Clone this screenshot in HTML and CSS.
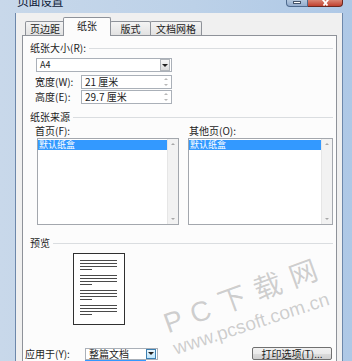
FILE: index.html
```html
<!DOCTYPE html>
<html lang="zh-CN">
<head>
<meta charset="utf-8">
<title>页面设置</title>
<link rel="stylesheet" href="styles.css">
</head>
<body>
<div class="window">
  <div class="titlebar">
    <span class="title">页面设置</span>
    <div class="caption">
      <span class="cap-min"><i></i></span>
      <span class="cap-close"><svg width="9" height="6" viewBox="0 0 9 6"><path d="M0.5 -2 L6.5 5.5 M8.5 -2 L2.5 5.5" stroke="#fff" stroke-width="1.8" fill="none"/></svg></span>
    </div>
  </div>
  <div class="frame">
    <div class="client">
      <div class="tabs">
        <span class="tab t1">页边距</span>
        <span class="tab t2 active">纸张</span>
        <span class="tab t3">版式</span>
        <span class="tab t4">文档网格</span>
      </div>
      <div class="panel">
        <div class="group"><span class="group-label">纸张大小(<u>R</u>):</span><span class="group-line"></span></div>
        <div class="combo size-combo"><span class="combo-text">A4</span><span class="combo-btn"><b></b></span></div>
        <div class="field-row first">
          <span class="field-label">宽度(<u>W</u>):</span>
          <div class="spin"><span class="spin-text">21 厘米</span><span class="spin-btn"><b class="up"></b><b class="down"></b></span></div>
        </div>
        <div class="field-row">
          <span class="field-label">高度(<u>E</u>):</span>
          <div class="spin"><span class="spin-text">29.7 厘米</span><span class="spin-btn"><b class="up"></b><b class="down"></b></span></div>
        </div>
        <div class="group source-group"><span class="group-label">纸张来源</span><span class="group-line"></span></div>
        <div class="source">
          <div class="src-col left">
            <span class="src-label">首页(<u>F</u>):</span>
            <div class="listbox">
              <div class="list-items"><span class="item selected">默认纸盒</span></div>
              <div class="vscroll"><b class="up"></b><b class="down"></b></div>
            </div>
          </div>
          <div class="src-col right">
            <span class="src-label">其他页(<u>O</u>):</span>
            <div class="listbox wide">
              <div class="list-items"><span class="item selected">默认纸盒</span></div>
              <div class="vscroll"><b class="up"></b><b class="down"></b></div>
            </div>
          </div>
        </div>
        <div class="group preview-group"><span class="group-label">预览</span><span class="group-line"></span></div>
        <div class="page">
          <div class="para"><i></i><i></i><i></i><i class="short"></i></div>
          <div class="para"><i></i><i></i><i></i><i class="short"></i></div>
          <div class="para"><i></i><i></i><i></i><i class="short"></i></div>
          <div class="para"><i></i><i></i><i></i><i class="short"></i></div>
        </div>
        <div class="bottom-row">
          <span class="apply-label">应用于(<u>Y</u>):</span>
          <div class="combo apply-combo"><span class="combo-text">整篇文档</span><span class="combo-btn hot"><b></b></span>
            <div class="drop-list"></div>
          </div>
          <span class="button">打印选项(<u>T</u>)...</span>
        </div>
      </div>
    </div>
  </div>
  <div class="watermark">
    <span class="wm-big">P C 下 载 网</span>
    <span class="wm-url">www.pcsoft.com.cn</span>
  </div>
</div>
</body>
</html>
```
FILE: styles.css
```css
* { box-sizing: border-box; margin: 0; padding: 0; }
html, body { width: 352px; height: 361px; overflow: hidden; }
body {
  font-family: "Noto Sans CJK SC", "Noto Sans", sans-serif;
  font-size: 10px;
  color: #1c1c1c;
  background: #c3d5ea;
}
u { text-decoration: none; }

.window {
  position: relative;
  width: 352px;
  height: 361px;
  display: flex;
  flex-direction: column;
  background: linear-gradient(to right, #c8d8ea, #bcd1e8 55%, #aec8e6);
}

/* title bar */
.titlebar {
  height: 13px;
  display: flex;
  align-items: flex-start;
  padding-left: 17px;
}
.title {
  font-size: 12px;
  line-height: 12px;
  margin-top: -5px;
  color: #0f2038;
  letter-spacing: -0.5px;
}
.caption {
  margin-left: auto;
  margin-right: 9px;
  display: flex;
  height: 7px;
}
.cap-min {
  width: 22px;
  height: 7px;
  border: 1px solid #4e6a8e;
  border-top: none;
  border-radius: 0 0 0 4px;
  background: linear-gradient(#b4c8de, #93acce);
  display: flex;
  justify-content: center;
}
.cap-min i {
  width: 8px;
  height: 3px;
  background: #fff;
  margin-top: 1px;
  border: 1px solid #44546a;
}
.cap-close {
  width: 35px;
  height: 7px;
  border: 1px solid #6b2820;
  border-top: none;
  border-left: none;
  border-radius: 0 0 4px 0;
  background: linear-gradient(#d98473, #c0412f);
  display: flex;
  justify-content: center;
}

/* window frame + client */
.frame {
  flex: 1;
  min-height: 0;
  display: flex;
  padding-left: 15px;
  padding-right: 9px;
}
.client {
  flex: 1;
  display: flex;
  flex-direction: column;
  background: #f0f0f0;
  border-left: 1px solid #6d88ab;
  border-right: 1px solid #6d88ab;
  padding: 4px 5px 0 6px;
}

/* tabs */
.tabs {
  height: 18px;
  display: flex;
  align-items: flex-end;
  padding-left: 3px;
  position: relative;
  z-index: 1;
}
.tab {
  height: 14px;
  border: 1px solid #8e9299;
  border-bottom: none;
  border-radius: 2px 2px 0 0;
  background: linear-gradient(#f4f4f4, #e2e2e2);
  font-size: 10px;
  line-height: 13px;
  text-align: center;
}
.t1 { width: 40px; }
.t2 { width: 48px; margin-left: -2px; }
.t3 { width: 41px; margin-left: -1px; }
.t4 { width: 52px; margin-left: -1px; }
.tab.active {
  height: 19px;
  margin-bottom: -1px;
  background: #fcfcfc;
  position: relative;
  z-index: 2;
  line-height: 16px;
}

/* panel */
.panel {
  flex: 1;
  border: 1px solid #8e9299;
  border-bottom: none;
  background: #fcfcfc;
  display: flex;
  flex-direction: column;
}
.group {
  height: 12px;
  margin-top: 6px;
  padding-left: 7px;
  display: flex;
  align-items: center;
  line-height: 12px;
}
.group-line {
  flex: 1;
  height: 1px;
  background: #dadde0;
  margin: 1px 3px 0 3px;
}

.combo {
  height: 14px;
  border: 1px solid #aab0b8;
  background: #fff;
  display: flex;
  align-items: center;
  font-size: 9px;
  padding: 0 1px 0 3px;
  line-height: 12px;
}
.combo-text { flex: 1; }
.combo-btn {
  width: 10px;
  height: 12px;
  border: 1px solid #b2b6bb;
  background: linear-gradient(#f6f6f6, #dcdcdc);
  display: flex;
  align-items: center;
  justify-content: center;
}
.combo-btn b {
  width: 0; height: 0;
  border-left: 3px solid transparent;
  border-right: 3px solid transparent;
  border-top: 3px solid #222;
}
.size-combo {
  width: 136px;
  margin: 4px 0 0 13px;
}

.field-row {
  display: flex;
  align-items: center;
  height: 14px;
  margin-top: 1px;
  padding-left: 12px;
}
.field-row.first { margin-top: 3px; }
.field-label { width: 46px; line-height: 12px; }
.spin {
  width: 91px;
  height: 14px;
  border: 1px solid #aab0b8;
  background: #fff;
  display: flex;
  align-items: center;
  padding: 0 1px 0 3px;
  line-height: 12px;
}
.spin-text { flex: 1; }
.spin-btn {
  width: 9px;
  height: 12px;
  display: flex;
  flex-direction: column;
  align-items: center;
  justify-content: space-around;
}
.spin-btn b { width: 0; height: 0; border-left: 2px solid transparent; border-right: 2px solid transparent; }
.spin-btn .up { border-bottom: 2px solid #b8b8b8; }
.spin-btn .down { border-top: 2px solid #b8b8b8; }

.source-group { margin-top: 7px; }

.source {
  display: grid;
  grid-template-columns: 153px 145px;
  padding-left: 12px;
  margin-top: 2px;
}
.src-col { display: flex; flex-direction: column; }
.src-label { height: 12px; line-height: 12px; margin-bottom: 1px; }
.right .src-label { padding-left: 1px; }
.listbox {
  height: 87px;
  border: 1px solid #a3a7ad;
  background: #fff;
  display: flex;
}
.left .listbox { width: 142px; margin-left: 2px; }
.listbox.wide { width: 145px; }
.list-items { flex: 1; padding: 1px 0 0 0; display: flex; flex-direction: column; }
.item {
  height: 10px;
  line-height: 10px;
  font-size: 9px;
  padding-left: 1px;
}
.item.selected { background: #3399ff; color: #fff; }
.vscroll {
  width: 11px;
  background: #f2f2f2;
  border-left: 1px solid #e6e6e6;
  display: flex;
  flex-direction: column;
  align-items: center;
  justify-content: space-between;
  padding: 4px 0;
}
.vscroll b { width: 0; height: 0; border-left: 2px solid transparent; border-right: 2px solid transparent; }
.vscroll .up { border-bottom: 2px solid #a8a8a8; }
.vscroll .down { border-top: 2px solid #a8a8a8; }

.preview-group { margin-top: 12px; }

.page {
  width: 52px;
  height: 72px;
  margin: 4px 0 0 50px;
  border: 1px solid #303030;
  background: #fff;
  padding: 6px 7px 0 6px;
  display: flex;
  flex-direction: column;
  gap: 5px;
}
.para { display: flex; flex-direction: column; gap: 2px; }
.para i { height: 1px; background: #4a4a4a; }
.para i.short { width: 12px; }

.bottom-row {
  display: flex;
  align-items: center;
  height: 13px;
  margin-top: 22px;
  padding-left: 2px;
}
.apply-label { width: 60px; line-height: 12px; }
.apply-combo {
  width: 73px;
  height: 12px;
  position: relative;
  font-size: 10px;
}
.combo-btn.hot {
  height: 10px;
  border-color: #3c7fb1;
  background: linear-gradient(#eaf6fd, #bee6fd);
}
.drop-list {
  position: absolute;
  left: -1px;
  top: 11px;
  width: 61px;
  height: 4px;
  background: #3399ff;
}
.button {
  margin-left: auto;
  margin-right: 4px;
  width: 80px;
  height: 13px;
  border: 1px solid #707070;
  border-radius: 2px;
  background: linear-gradient(#f2f2f2 0%, #ebebeb 50%, #dddddd 51%, #cfcfcf 100%);
  text-align: center;
  line-height: 11px;
}

/* watermark overlay */
.watermark {
  position: absolute;
  inset: 0;
  pointer-events: none;
}
.wm-big {
  position: absolute;
  left: 165px;
  top: 310px;
  font-family: "Liberation Sans", "Noto Sans CJK SC", sans-serif;
  font-size: 28px;
  line-height: 30px;
  letter-spacing: 1px;
  color: rgba(140, 140, 140, 0.42);
  transform: rotate(-20deg);
  transform-origin: 0 15px;
  white-space: nowrap;
}
.wm-url {
  position: absolute;
  left: 174px;
  top: 338px;
  font-family: "Liberation Sans", sans-serif;
  font-size: 19px;
  line-height: 22px;
  color: rgba(140, 140, 140, 0.42);
  transform: rotate(-18deg);
  transform-origin: 0 11px;
  white-space: nowrap;
}
```
